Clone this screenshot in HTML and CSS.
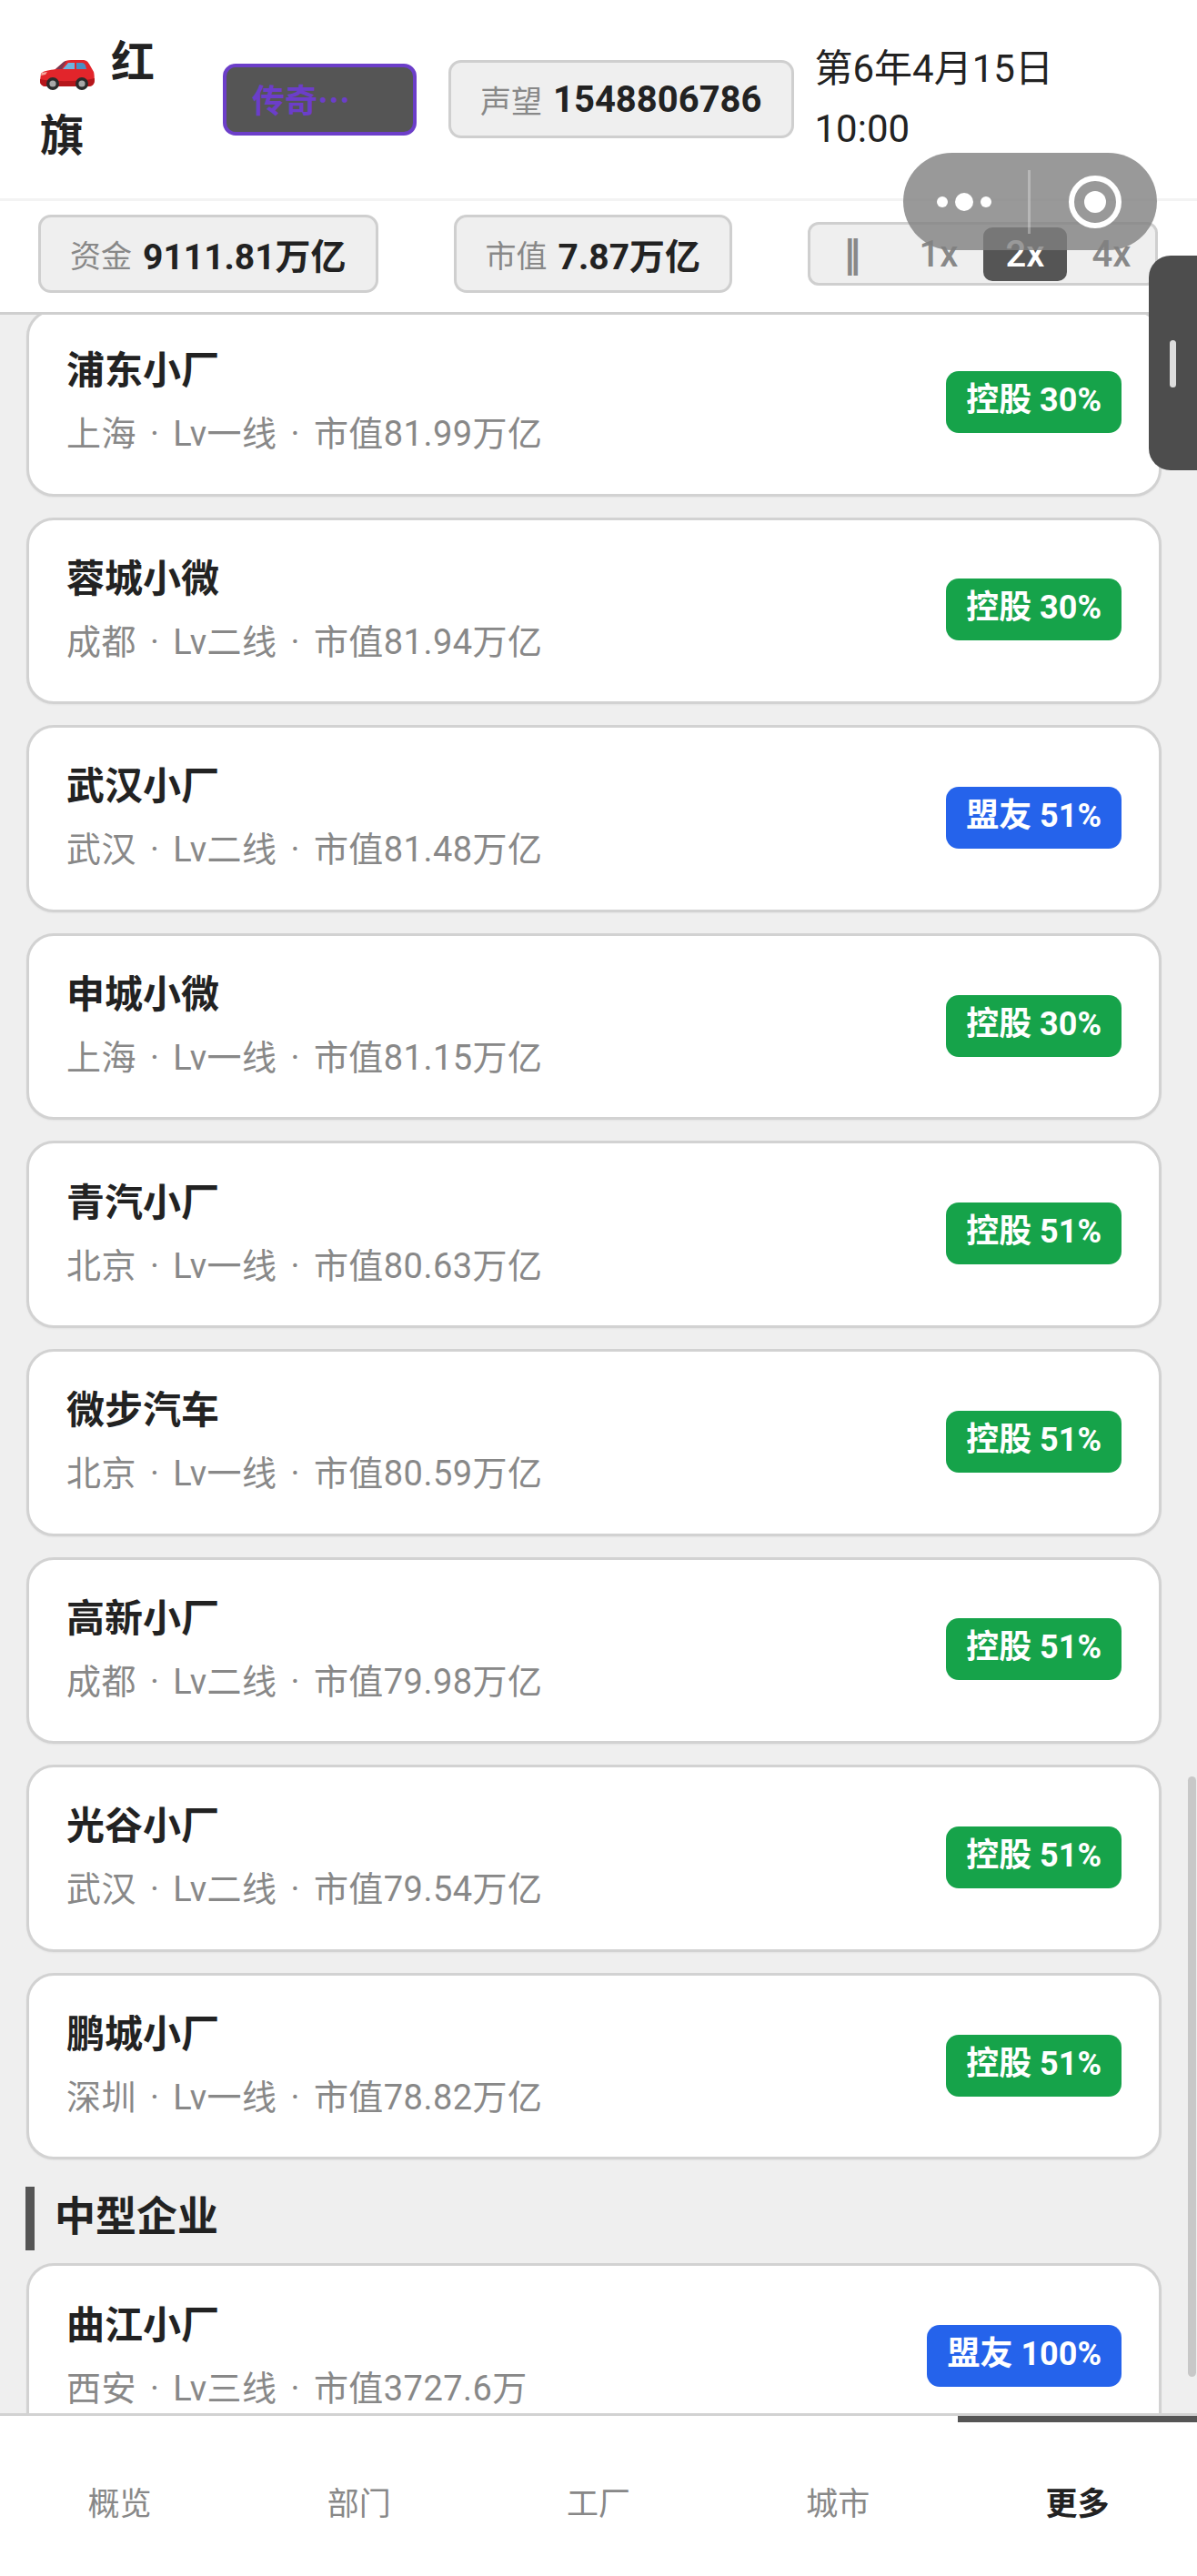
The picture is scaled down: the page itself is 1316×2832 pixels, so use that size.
FILE: index.html
```html
<!DOCTYPE html>
<html lang="zh-CN">
<head>
    <meta charset="UTF-8">
    <meta name="viewport" content="width=device-width, initial-scale=1.0">
    <title>企业列表</title>
    <link rel="stylesheet" href="styles.css">
</head>
<body>
    <header class="top">
        <div class="top-row">
            <div class="company">
                <svg class="car" viewBox="0 0 60 33" aria-hidden="true">
                    <path d="M1 15 C3 12 11 11 17 10 L25 3 C27 1 30 0 34 0 L47 0 C51 0 53 2 55 6 L59 13 C60 17 60 23 59 26 C58 28 56 29 53 29 L7 29 C3 29 0 27 0 23 Z" fill="#e2252b"/>
                    <path d="M0 21 C14 24 44 24 60 20 C60 23 60 25 59 26 C58 28 56 29 53 29 L7 29 C3 29 0 27 0 23 Z" fill="#b5161b"/>
                    <path d="M17 10 L25 3 C26 2 27 1 29 1 L24 10 Z" fill="#7a3a52"/>
                    <path d="M25 10 L31 3 L38 3 L38 10 Z" fill="#6db4e0"/>
                    <path d="M40 3 L46 3 C48 3 49 4 50 6 L51 10 L40 10 Z" fill="#4a8fc4"/>
                    <path d="M2 14 L8 13 L6 16 L1 17 Z" fill="#f5a9a0"/>
                    <circle cx="14" cy="26" r="7" fill="#2b2b2b"/>
                    <circle cx="14" cy="26" r="3.6" fill="#a8a8a8"/>
                    <circle cx="46" cy="26" r="7" fill="#2b2b2b"/>
                    <circle cx="46" cy="26" r="3.6" fill="#a8a8a8"/>
                </svg>
                <span class="company-name">红旗</span>
            </div>
            <div class="rank">传奇…</div>
            <div class="stat"><span class="stat-label">声望</span> <b>1548806786</b></div>
            <div class="date">第6年4月15日<br>10:00</div>
        </div>
        <div class="top-row2">
            <div class="stat stat-small"><span class="stat-label">资金</span> <b>9111.81万亿</b></div>
            <div class="stat stat-small"><span class="stat-label">市值</span> <b>7.87万亿</b></div>
            <div class="speed">
                <span class="speed-btn pause">‖</span>
                <span class="speed-btn">1x</span>
                <span class="speed-btn on">2x</span>
                <span class="speed-btn">4x</span>
            </div>
        </div>
    </header>

    <main class="content">
        <div class="list">
            <div class="card">
                <div class="card-info"><div class="card-name">浦东小厂</div><div class="card-sub">上海<i>·</i>Lv一线<i>·</i>市值81.99万亿</div></div>
                <span class="tag green">控股 30%</span>
            </div>
            <div class="card">
                <div class="card-info"><div class="card-name">蓉城小微</div><div class="card-sub">成都<i>·</i>Lv二线<i>·</i>市值81.94万亿</div></div>
                <span class="tag green">控股 30%</span>
            </div>
            <div class="card">
                <div class="card-info"><div class="card-name">武汉小厂</div><div class="card-sub">武汉<i>·</i>Lv二线<i>·</i>市值81.48万亿</div></div>
                <span class="tag blue">盟友 51%</span>
            </div>
            <div class="card">
                <div class="card-info"><div class="card-name">申城小微</div><div class="card-sub">上海<i>·</i>Lv一线<i>·</i>市值81.15万亿</div></div>
                <span class="tag green">控股 30%</span>
            </div>
            <div class="card">
                <div class="card-info"><div class="card-name">青汽小厂</div><div class="card-sub">北京<i>·</i>Lv一线<i>·</i>市值80.63万亿</div></div>
                <span class="tag green">控股 51%</span>
            </div>
            <div class="card">
                <div class="card-info"><div class="card-name">微步汽车</div><div class="card-sub">北京<i>·</i>Lv一线<i>·</i>市值80.59万亿</div></div>
                <span class="tag green">控股 51%</span>
            </div>
            <div class="card">
                <div class="card-info"><div class="card-name">高新小厂</div><div class="card-sub">成都<i>·</i>Lv二线<i>·</i>市值79.98万亿</div></div>
                <span class="tag green">控股 51%</span>
            </div>
            <div class="card">
                <div class="card-info"><div class="card-name">光谷小厂</div><div class="card-sub">武汉<i>·</i>Lv二线<i>·</i>市值79.54万亿</div></div>
                <span class="tag green">控股 51%</span>
            </div>
            <div class="card">
                <div class="card-info"><div class="card-name">鹏城小厂</div><div class="card-sub">深圳<i>·</i>Lv一线<i>·</i>市值78.82万亿</div></div>
                <span class="tag green">控股 51%</span>
            </div>
            <h3 class="section-title">中型企业</h3>
            <div class="card">
                <div class="card-info"><div class="card-name">曲江小厂</div><div class="card-sub">西安<i>·</i>Lv三线<i>·</i>市值3727.6万</div></div>
                <span class="tag blue">盟友 100%</span>
            </div>
        </div>
        <div class="scrollbar"></div>
    </main>

    <nav class="tabs">
        <a class="tab">概览</a>
        <a class="tab">部门</a>
        <a class="tab">工厂</a>
        <a class="tab">城市</a>
        <a class="tab active">更多</a>
    </nav>

    <!-- 小程序胶囊 -->
    <div class="capsule">
        <svg class="capsule-dots" viewBox="0 0 60 20" aria-hidden="true">
            <circle cx="6" cy="10" r="6" fill="#fff"/>
            <circle cx="30" cy="10" r="10" fill="#fff"/>
            <circle cx="54" cy="10" r="6" fill="#fff"/>
        </svg>
        <span class="capsule-line"></span>
        <svg class="capsule-ring" viewBox="0 0 60 60" aria-hidden="true">
            <circle cx="30" cy="30" r="26" fill="none" stroke="#fff" stroke-width="6"/>
            <circle cx="30" cy="30" r="12" fill="#fff"/>
        </svg>
    </div>

    <div class="drawer"><span class="drawer-bar"></span></div>
</body>
</html>
```

FILE: styles.css
```css
* {
    box-sizing: border-box;
}
html, body {
    margin: 0;
    height: 100%;
}
body {
    position: relative;
    display: flex;
    flex-direction: column;
    height: 2832px;
    overflow: hidden;
    background-color: #efefef;
    color: #222222;
    font-family: Roboto, "Noto Sans CJK SC", sans-serif;
}

/* 顶部 */
.top {
    background-color: #ffffff;
    border-bottom: 3px solid #cfcfcf;
    flex: none;
    position: relative;
    z-index: 2;
}
.top-row {
    display: flex;
    align-items: center;
    height: 221px;
    padding-left: 44px;
    border-bottom: 3px solid #f3f3f3;
}
.company {
    width: 140px;
    margin-right: 61px;
    font-size: 48px;
    font-weight: 700;
    line-height: 81px;
}
.car {
    width: 60px;
    height: 33px;
    margin-right: 6px;
    vertical-align: -14px;
}
.rank {
    width: 213px;
    height: 79px;
    margin-right: 35px;
    padding-left: 28px;
    line-height: 68px;
    font-family: "Noto Sans CJK SC", sans-serif;
    font-size: 36px;
    font-weight: 700;
    color: #6c3ec9;
    background-color: #555555;
    border: 4px solid #6c3ec9;
    border-radius: 14px;
}
.stat {
    height: 86px;
    padding: 0 32px;
    display: flex;
    align-items: center;
    gap: 12px;
    background-color: #efefef;
    border: 3px solid #cfcfcf;
    border-radius: 14px;
    font-size: 40px;
    white-space: nowrap;
}
.stat-small {
    font-size: 39px;
}
.stat-label {
    font-size: 34px;
    color: #888888;
}
.date {
    margin-left: 23px;
    font-size: 42px;
    line-height: 66px;
}
.top-row2 {
    display: flex;
    align-items: center;
    justify-content: space-between;
    height: 122px;
    padding: 0 43px 6px 42px;
}
.speed {
    display: flex;
    gap: 3px;
    align-items: center;
    height: 70px;
    padding: 0 2px 0 0;
    background-color: #efefef;
    border: 3px solid #cfcfcf;
    border-radius: 12px;
}
.speed-btn {
    width: 92px;
    height: 59px;
    margin-top: 1px;
    text-align: center;
    line-height: 59px;
    font-size: 40px;
    font-weight: 500;
    color: #888888;
    border-radius: 10px;
}
.speed-btn.on {
    background-color: #555555;
    color: #ffffff;
}
.speed-btn.pause {
    font-family: "DejaVu Sans", sans-serif;
    font-weight: 700;
}

/* 列表 */
.content {
    flex: 1;
    min-height: 0;
    overflow: hidden;
    position: relative;
}
.list {
    margin-top: -6px;
    padding: 0 39px 0 29px;
}
.card {
    display: flex;
    align-items: center;
    justify-content: space-between;
    height: 205.6px;
    margin-bottom: 23px;
    padding: 0 41px 0 41px;
    background-color: #ffffff;
    border: 3px solid #d2d2d2;
    border-radius: 30px;
    box-shadow: 0 1px 2px rgba(0, 0, 0, 0.05);
}
.card-name {
    font-size: 42px;
    font-weight: 700;
    line-height: 62px;
}
.card-sub {
    margin-top: 7px;
    font-size: 38px;
    letter-spacing: 0.45px;
    line-height: 62px;
    color: #888888;
}
.card-sub i {
    font-style: normal;
    margin: 0 15px;
}
.tag {
    height: 68px;
    margin-bottom: 2px;
    padding: 0 22px;
    line-height: 64px;
    font-size: 36px;
    font-weight: 700;
    color: #ffffff;
    border-radius: 14px;
    white-space: nowrap;
}
.green {
    background-color: #16a34a;
}
.blue {
    background-color: #2563eb;
}
.section-title {
    height: 70px;
    margin: 30px 0 14px -1px;
    padding-left: 22px;
    border-left: 10px solid #555555;
    font-size: 45px;
    font-weight: 700;
    line-height: 68px;
}
.scrollbar {
    position: absolute;
    top: 1607px;
    right: 1px;
    width: 9px;
    height: 660px;
    background-color: #c8c8c8;
    border-radius: 5px;
}

/* 底部导航 */
.tabs {
    flex: none;
    display: flex;
    height: 179px;
    background-color: #ffffff;
    border-top: 3px solid #d2d2d2;
    position: relative;
}
.tab {
    flex: 1;
    text-align: center;
    font-size: 35px;
    line-height: 195px;
    color: #888888;
}
.tab.active {
    color: #222222;
    font-weight: 700;
    box-shadow: inset 0 7px 0 #555555;
}

/* 悬浮 */
.capsule {
    position: absolute;
    top: 168px;
    left: 993px;
    width: 279px;
    height: 107px;
    z-index: 5;
    background-color: rgba(128, 128, 128, 0.8);
    border-radius: 54px;
}
.capsule-dots {
    position: absolute;
    left: 37px;
    top: 44px;
    width: 60px;
    height: 20px;
}
.capsule-line {
    position: absolute;
    left: 137px;
    top: 19px;
    width: 3px;
    height: 70px;
    background-color: rgba(255, 255, 255, 0.3);
}
.capsule-ring {
    position: absolute;
    left: 181px;
    top: 24px;
    width: 60px;
    height: 60px;
}
.drawer {
    position: absolute;
    top: 281px;
    right: 0;
    width: 53px;
    height: 236px;
    z-index: 6;
    background-color: #4d4d4d;
    border-radius: 24px 0 0 24px;
}
.drawer-bar {
    position: absolute;
    left: 23px;
    top: 93px;
    width: 7px;
    height: 52px;
    background-color: #dddddd;
    border-radius: 4px;
}
```
